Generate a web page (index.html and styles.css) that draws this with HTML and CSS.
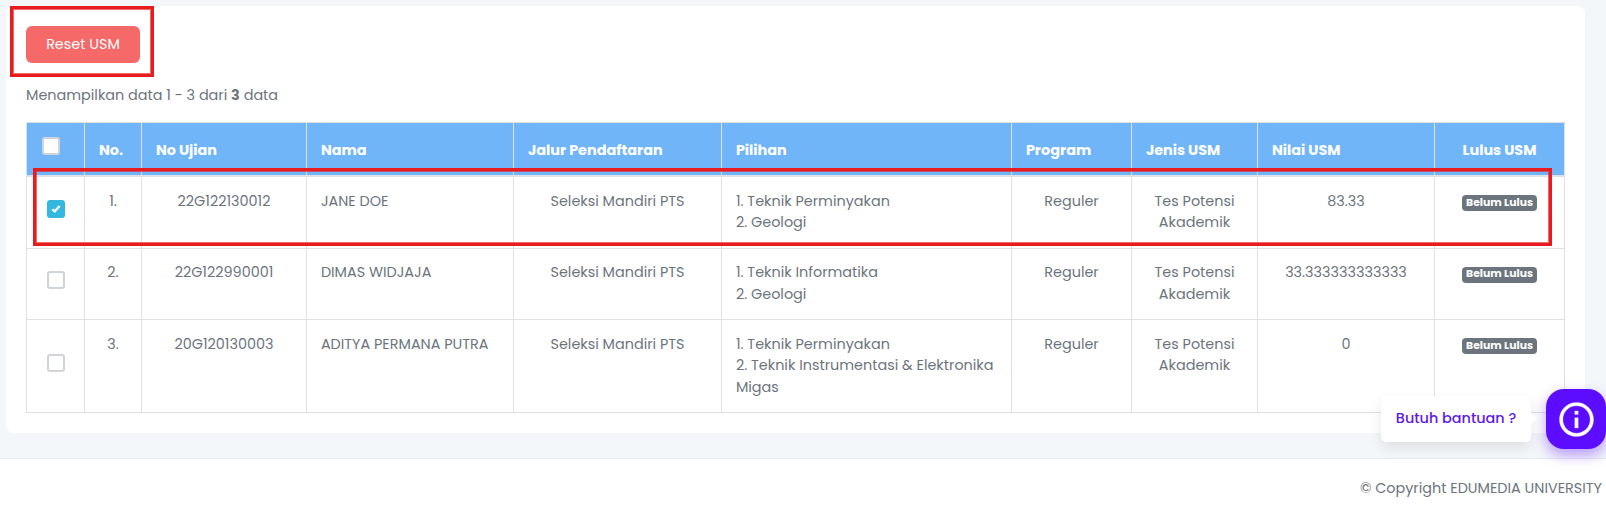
FILE: index.html
```html
<!DOCTYPE html>
<html lang="id">
<head>
<meta charset="utf-8">
<title>Reset USM</title>
<link rel="stylesheet" href="styles.css">
</head>
<body>
<main class="content">
  <section class="card">
    <button class="btn-reset" type="button">Reset USM</button>
    <p class="summary">Menampilkan data 1 - 3 dari <b>3</b> data</p>
    <table class="grid">
      <colgroup>
        <col class="c-check"><col class="c-no"><col class="c-exam"><col class="c-name"><col class="c-path"><col class="c-choice"><col class="c-program"><col class="c-type"><col class="c-score"><col class="c-status">
      </colgroup>
      <thead>
        <tr>
          <th class="check-all"><span class="box"></span></th>
          <th>No.</th>
          <th>No Ujian</th>
          <th>Nama</th>
          <th>Jalur Pendaftaran</th>
          <th>Pilihan</th>
          <th>Program</th>
          <th>Jenis USM</th>
          <th>Nilai USM</th>
          <th class="center">Lulus USM</th>
        </tr>
      </thead>
      <tbody>
        <tr class="row-1">
          <td class="check"><span class="box checked"><svg viewBox="0 0 18 18" width="18" height="18"><path d="M5.4 9.2 7.7 11.4 12.6 6.1" fill="none" stroke="#fff" stroke-width="2.2"/></svg></span></td>
          <td class="center">1.</td>
          <td class="center">22G122130012</td>
          <td>JANE DOE</td>
          <td class="center">Seleksi Mandiri PTS</td>
          <td>1. Teknik Perminyakan<br>2. Geologi</td>
          <td class="center">Reguler</td>
          <td class="center">Tes Potensi<br>Akademik</td>
          <td class="center">83.33</td>
          <td class="center"><span class="badge">Belum Lulus</span></td>
        </tr>
        <tr class="row-2">
          <td class="check"><span class="box"></span></td>
          <td class="center">2.</td>
          <td class="center">22G122990001</td>
          <td>DIMAS WIDJAJA</td>
          <td class="center">Seleksi Mandiri PTS</td>
          <td>1. Teknik Informatika<br>2. Geologi</td>
          <td class="center">Reguler</td>
          <td class="center">Tes Potensi<br>Akademik</td>
          <td class="center">33.333333333333</td>
          <td class="center"><span class="badge">Belum Lulus</span></td>
        </tr>
        <tr class="row-3">
          <td class="check"><span class="box"></span></td>
          <td class="center">3.</td>
          <td class="center">20G120130003</td>
          <td>ADITYA PERMANA PUTRA</td>
          <td class="center">Seleksi Mandiri PTS</td>
          <td>1. Teknik Perminyakan<br>2. Teknik Instrumentasi &amp; Elektronika<br>Migas</td>
          <td class="center">Reguler</td>
          <td class="center">Tes Potensi<br>Akademik</td>
          <td class="center">0</td>
          <td class="center"><span class="badge">Belum Lulus</span></td>
        </tr>
      </tbody>
    </table>
  </section>
</main>
<footer class="footer">© Copyright EDUMEDIA UNIVERSITY</footer>

<div class="mark mark-button"></div>
<div class="mark mark-row"></div>

<div class="help">
  <div class="help-bubble">Butuh bantuan ?</div>
  <div class="help-button">
    <svg viewBox="0 0 24 24" width="41" height="41" fill="#fff"><path d="M11 7h2v2h-2zm0 4h2v6h-2zm1-9C6.48 2 2 6.48 2 12s4.48 10 10 10 10-4.48 10-10S17.52 2 12 2zm0 18c-4.41 0-8-3.59-8-8s3.59-8 8-8 8 3.59 8 8-3.59 8-8 8z" stroke="#fff" stroke-width=".15"/></svg>
  </div>
</div>
</body>
</html>
```
FILE: styles.css
```css
* { box-sizing: border-box; }
body {
  margin: 0;
  height: 512px;
  overflow: hidden;
  display: flex;
  flex-direction: column;
  background: #f3f7fa;
  color: #6c757d;
  font: 14.4px/21.6px Poppins, Inter, sans-serif;
}
.content { flex: none; height: 458px; padding: 6px 21px 0 6px; }
.card { height: 427px; padding: 20px 20px 0; background: #fff; border-radius: 8px; }
.btn-reset {
  display: block;
  width: 114px;
  height: 37px;
  padding: 0;
  border: 0;
  border-radius: 6px;
  background: #f56969;
  color: #fff;
  font: inherit;
}
.summary { margin: 21px 0 17px; height: 21px; line-height: 22px; white-space: nowrap; }
.summary b { font-weight: 700; }

.grid {
  width: 1539px;
  table-layout: fixed;
  border-collapse: separate;
  border-spacing: 0;
  border: solid #dee2e6;
  border-width: 1px 0 0 1px;
}
.c-check { width: 58px; }
.c-no { width: 57px; }
.c-exam { width: 165px; }
.c-name { width: 207px; }
.c-path { width: 208px; }
.c-choice { width: 290px; }
.c-program { width: 120px; }
.c-type { width: 126px; }
.c-score { width: 177px; }
.c-status { width: 130px; }
.grid th, .grid td {
  border: solid #dee2e6;
  border-width: 0 1px 1px 0;
  text-align: left;
  vertical-align: top;
  white-space: nowrap;
}
.grid th {
  height: 54px;
  padding: 17px 13px 0 13.9px;
  border-bottom-width: 2px;
  background: #71b5f9;
  background-clip: padding-box;
  color: #fff;
  font-weight: 700;
}
.grid td { padding: 13.8px 13px 0 13.9px; }
.grid .center { padding-left: 13px; text-align: center; }
.row-1 td { height: 72px; }
.row-2 td { height: 71px; }
.row-2 td:not(.check) { padding-top: 13.2px; }
.row-3 td { height: 93px; }
.grid .check-all { padding: 14px 0 0 15px; line-height: 0; }
.grid .check { padding: 0 0 7px 20px; vertical-align: middle; line-height: 0; }
.row-1 .check, .row-2 .check { padding-bottom: 8px; }
.box {
  display: inline-block;
  width: 18px;
  height: 18px;
  border: 2px solid #ced4da;
  border-radius: 3px;
  background: #fff;
}
.box.checked { border: 0; background: #35b8e0; }
.badge {
  display: inline-block;
  padding: 2.7px 4.32px;
  border-radius: 4px;
  background: #6c757d;
  color: #fff;
  font-size: 10.8px;
  font-weight: 700;
  line-height: 1;
}

.footer {
  flex: 1;
  padding: 19px 4px 0;
  border-top: 1px solid #e7ebee;
  background: #fff;
  text-align: right;
}

.mark { position: absolute; border: 3px solid #e81c1e; box-shadow: inset 0 0 0 1px rgba(232, 28, 30, .65); }
.mark-button { left: 10px; top: 6px; width: 144px; height: 71px; }
.mark-row { left: 33px; top: 168px; width: 1519px; height: 78px; }

.help { position: absolute; right: 0; top: 389px; display: flex; align-items: center; gap: 15px; }
.help-bubble {
  position: relative;
  width: 150px;
  height: 46px;
  border-radius: 5px;
  background: #fff;
  box-shadow: 0 6px 14px rgba(0, 0, 0, .09);
  color: #6019f0;
  font-weight: 500;
  line-height: 45px;
  text-align: center;
}
.help-bubble::after {
  content: "";
  position: absolute;
  right: -4px;
  top: 18px;
  width: 9px;
  height: 9px;
  background: #fff;
  transform: rotate(45deg);
}
.help-button {
  width: 60px;
  height: 60px;
  display: flex;
  align-items: center;
  justify-content: center;
  border-radius: 18px;
  background: #5c0cff;
  box-shadow: 0 6px 14px rgba(92, 12, 255, .4);
}
```
